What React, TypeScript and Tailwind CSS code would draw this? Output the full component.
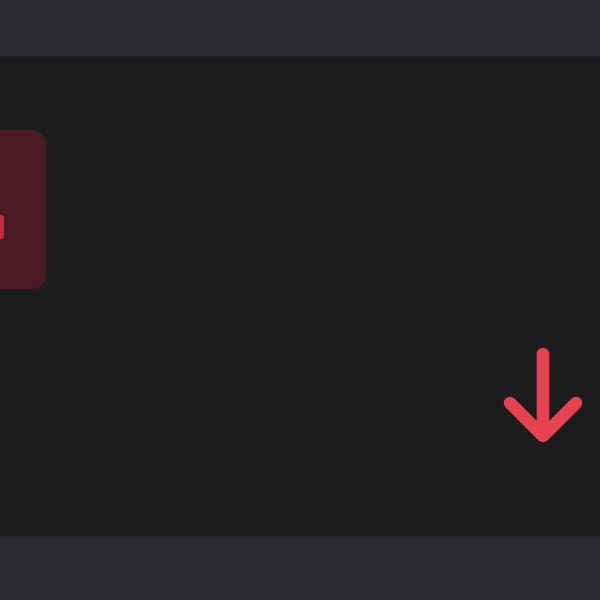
import { FC } from "react";

const ArrowDown: FC = () => (
  <svg width="90" height="100" viewBox="0 0 90 100" fill="none">
    <path
      d="M45 11 V92 M12 60 L45 93 L78 60"
      stroke="#e6424f"
      strokeWidth="12.5"
      strokeLinecap="round"
      strokeLinejoin="round"
    />
  </svg>
);

const App: FC = () => {
  return (
    <div className="h-[600px] w-[600px] flex flex-col overflow-hidden bg-[#1c1c1e]">
      <header className="h-[57px] shrink-0 bg-[#2a292f] border-b border-[#232228]" />
      <main className="flex-1 flex flex-col">
        <div className="mt-[73px] ml-[-74px] w-[120px] h-[159px] rounded-[14px] bg-[#4a1b26] flex items-center pl-[72px]">
          <div className="h-[24px] w-[6px] rounded-full bg-[#c42c3c] mt-[35px]" />
        </div>
        <div className="flex justify-end pr-[12px] mt-[54px]">
          <ArrowDown />
        </div>
      </main>
      <footer className="h-[64px] shrink-0 bg-[#2a292f] border-t border-[#232228]" />
    </div>
  );
};

export default App;
